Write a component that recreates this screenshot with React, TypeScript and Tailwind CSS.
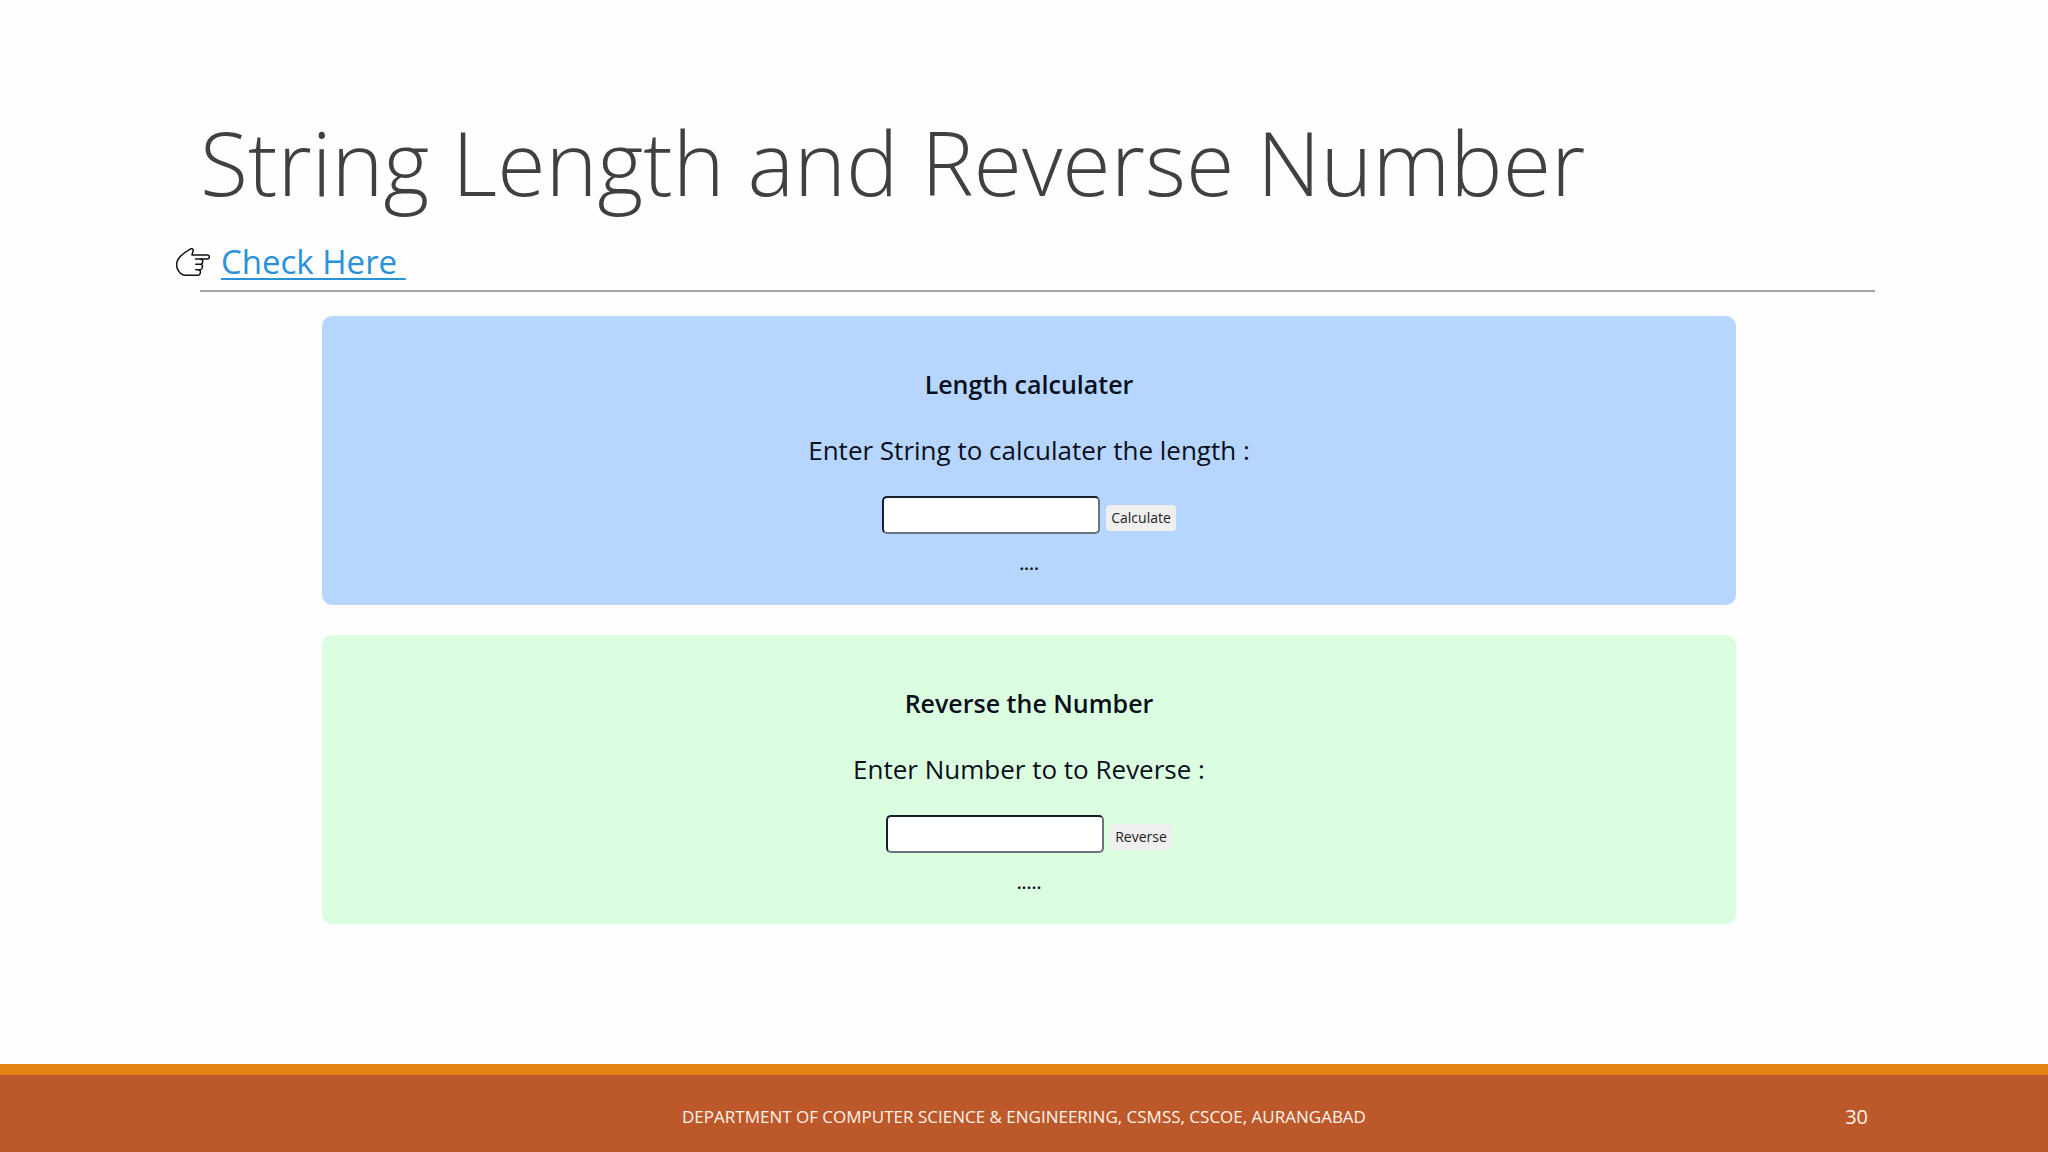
import React from 'react';

interface ToolCardProps {
  id: string;
  title: string;
  label: string;
  action: string;
  result: string;
  cardClass: string;
}

const tools: ToolCardProps[] = [
  {
    id: 'length',
    title: 'Length calculater',
    label: 'Enter String to calculater the length :',
    action: 'Calculate',
    result: '....',
    cardClass: 'bg-[#b6d5ff]',
  },
  {
    id: 'reverse',
    title: 'Reverse the Number',
    label: 'Enter Number to to Reverse :',
    action: 'Reverse',
    result: '.....',
    cardClass: 'bg-[#dbfee0]',
  },
];

const PointingHand: React.FC = () => (
  <svg
    className="h-7 w-[34px] shrink-0"
    viewBox="0 0 34 28"
    fill="none"
    stroke="#111"
    strokeWidth="1.5"
    strokeLinejoin="round"
    strokeLinecap="round"
    aria-hidden="true"
  >
    <path d="M16 6.9H31.4C34 6.9 34 11 31.4 11H19.5M16 6.9C16.2 4.8 17.6 3.2 17.1 1.6C16.7 .5 15.3 .5 14.2 1.1C9.8 3.6 5.4 6.6 2.8 10.2C.4 13.6 .3 18.4 1.8 21.6C3.4 24.9 6 27.3 10 27.3H21.6C24.8 27.3 25.4 22.4 22.8 21.8" />
    <path d="M24.8 11C27.4 11.4 27.4 15.8 24.8 16.2H19.8M24.8 16.2C27.3 16.7 27 21.2 24.2 21.7H19.8" />
  </svg>
);

const ToolCard: React.FC<ToolCardProps> = ({ id, title, label, action, result, cardClass }) => (
  <section className={`flex flex-col items-center rounded-[10px] pt-[50px] pb-7 text-[#0a0f1c] ${cardClass}`}>
    <h2 className="text-[25px] leading-9 font-semibold">{title}</h2>
    <label htmlFor={id} className="mt-[30px] text-[26px] leading-9">
      {label}
    </label>
    <div className="mt-7 flex items-end gap-1.5">
      <input
        id={id}
        type="text"
        className="h-[38px] w-[218px] rounded-[5px] border-2 border-t-[#16202c] border-r-[#6b7280] border-b-[#6b7280] border-l-[#16202c] bg-white px-2"
      />
      <button
        type="button"
        className="mb-[3px] h-[26px] rounded bg-[#efefef] px-[5px] text-[14px] leading-5 text-[#222]"
      >
        {action}
      </button>
    </div>
    <output htmlFor={id} className="mt-[15px] text-[18px] leading-7 font-semibold">
      {result}
    </output>
  </section>
);

const App: React.FC = () => {
  return (
    <div className="flex min-h-screen flex-col bg-[#fefefe] font-['Open_Sans','Noto_Sans',sans-serif]">
      <header className="pt-[102px] pr-[173px] pl-[176px]">
        <h1 className="pl-6 text-[88px] leading-[120px] font-[340] text-[#404040]">
          String Length and Reverse Number
        </h1>
        <div className="mt-4 flex items-center gap-[11px]">
          <PointingHand />
          <a
            href="#tools"
            className="text-[33px] leading-[48px] whitespace-pre text-[#2a92d8] underline decoration-2 underline-offset-4"
          >
            {'Check Here '}
          </a>
        </div>
        <hr className="mt-1 ml-6 border-t-2 border-[#a3a3a3]" />
      </header>

      <main id="tools" className="flex grow flex-col gap-[30px] pt-6 pr-[312px] pl-[322px]">
        {tools.map((tool) => (
          <ToolCard key={tool.id} {...tool} />
        ))}
      </main>

      <footer className="grid h-[88px] grid-cols-[1fr_auto_1fr] items-center border-t-[11px] border-[#e48312] bg-[#bd582a] pt-1.5 text-[#fff3ea]">
        <p className="col-start-2 text-[17px] leading-6 uppercase">
          Department of Computer Science &amp; Engineering, CSMSS, CSCOE, Aurangabad
        </p>
        <span className="pr-[180px] text-right text-[20px] leading-6">30</span>
      </footer>
    </div>
  );
};

export default App;
